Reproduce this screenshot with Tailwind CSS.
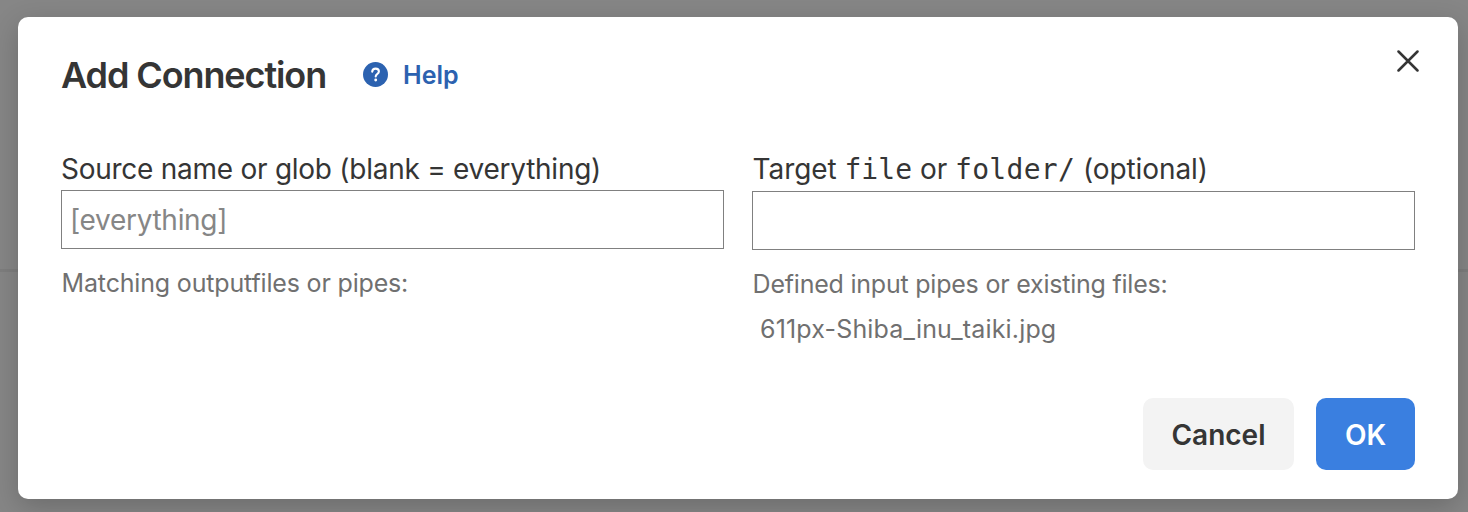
<!DOCTYPE html>
<html lang="en">
<head>
<meta charset="utf-8">
<title>Add Connection</title>
<script src="https://cdn.jsdelivr.net/npm/@tailwindcss/browser@4"></script>
</head>
<body class="h-[512px] overflow-hidden bg-[linear-gradient(#868686_0_269px,#7e7e7e_269px_272px,#868686_272px)] pt-[17px] pl-[18px] font-['Inter',sans-serif] text-[#353535]">
<main class="relative flex h-[482px] w-[1440px] flex-col rounded-[10px] bg-white px-[43px] shadow-[0_8px_28px_rgba(0,0,0,0.2)]">
  <header class="flex h-[117px] items-center">
    <h1 class="-mt-[2px] w-[302px] whitespace-nowrap text-[36px] leading-[44px] font-semibold tracking-[-1.1px]">Add Connection</h1>
    <a class="-mt-[2px] flex items-center gap-[15px] text-[#2c62b0]">
      <svg class="size-[25px]" viewBox="0 0 25 25" fill="none"><circle cx="12.5" cy="12.5" r="12.5" fill="#2c62b0"/><path d="M9.2 9.6C9.4 7.6 10.8 6.6 12.6 6.6c1.9 0 3.3 1.1 3.3 2.8 0 2.4-3.2 2.7-3.2 5" stroke="#fff" stroke-width="2.1" stroke-linecap="round"/><circle cx="12.7" cy="18" r="1.45" fill="#fff"/></svg>
      <span class="text-[25px] leading-8 font-semibold">Help</span>
    </a>
  </header>
  <button class="absolute top-[33px] right-[39px] size-[22px]" aria-label="Close"><svg class="size-[22px]" viewBox="0 0 22 22" stroke="#353535" stroke-width="2.5" stroke-linecap="round"><path d="M1.5 1.5l19 19M20.5 1.5l-19 19"/></svg></button>
  <section class="flex gap-[28px] pt-[18px]">
    <div class="w-[663px]">
      <label class="block h-[38px] whitespace-nowrap text-[28px] leading-[34px] tracking-[-0.26px]">Source name or glob (blank = everything)</label>
      <input class="block h-[59px] w-full border border-[#808080] px-[8px] text-[28px] tracking-[-0.3px] placeholder:text-[#868686]" placeholder="[everything]">
      <p class="mt-[18px] pl-[0.6px] text-[25px] leading-[32px] tracking-[-0.17px] whitespace-nowrap text-[#707070]">Matching outputfiles or pipes:</p>
    </div>
    <div class="w-[663px]">
      <label class="block h-[39px] whitespace-nowrap pl-[0.6px] text-[28px] leading-[34px] tracking-[-0.08px]">Target <code class="font-['DejaVu_Sans_Mono',monospace] text-[28px] leading-none tracking-[0.1px]">file</code> or <code class="font-['DejaVu_Sans_Mono',monospace] text-[28px] leading-none tracking-[0.3px]">folder/</code> (optional)</label>
      <input class="block h-[59px] w-full border border-[#808080] px-[8px] text-[28px]">
      <p class="mt-[18px] pl-[0.6px] text-[25px] leading-[32px] tracking-[-0.22px] whitespace-nowrap text-[#707070]">Defined input pipes or existing files:</p>
      <p class="mt-[13px] pl-[8px] text-[25px] leading-[32px] tracking-[0.17px] whitespace-nowrap text-[#707070]">611px-Shiba_inu_taiki.jpg</p>
    </div>
  </section>
  <footer class="mt-auto mb-[29px] flex justify-end gap-[22px] text-[28px] font-semibold">
    <button class="h-[72px] w-[151px] rounded-[10px] bg-[#f3f3f3] pt-[2px]">Cancel</button>
    <button class="h-[72px] w-[99px] rounded-[10px] bg-[#3a7fe0] pt-[2px] text-white">OK</button>
  </footer>
</main>
</body>
</html>
